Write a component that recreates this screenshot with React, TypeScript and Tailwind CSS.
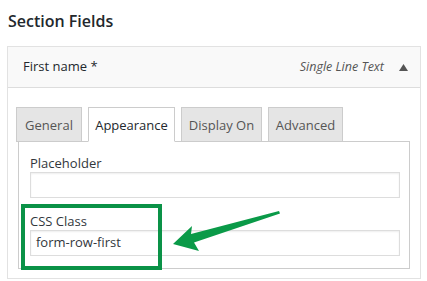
import React from "react";

const tabs = [
  { label: "General", w: "w-[66px]", active: false },
  { label: "Appearance", w: "w-[87px]", active: true },
  { label: "Display On", w: "w-[81px]", active: false },
  { label: "Advanced", w: "w-[75px]", active: false },
];

function Field({ label, value }: { label: string; value?: string }) {
  return (
    <div className="flex flex-col">
      <label className="text-[13px] leading-[18px] text-[#32373c]">{label}</label>
      <div className="h-[26px] border border-[#dddddd] shadow-[inset_0_1px_2px_rgba(0,0,0,0.07)] px-[5px] flex items-center text-[13px] text-[#32373c]">
        {value}
      </div>
    </div>
  );
}

export default function App() {
  return (
    <div
      className="relative w-[427px] h-[281px] bg-white overflow-hidden"
      style={{ fontFamily: '"Open Sans", "Noto Sans", sans-serif' }}
    >
      <h2 className="px-[8px] pt-[9px] text-[16px] leading-[24px] font-semibold text-[#23282d]">
        Section Fields
      </h2>

      <div className="mt-[13px] mx-[7px] w-[414px] border border-[#e2e2e2]">
        <div className="h-[41px] bg-[#f9f9f9] border-b border-[#dddddd] flex items-center justify-between pl-[15px] pr-[12px]">
          <span className="text-[13px] text-[#23282d]">First name *</span>
          <div className="flex items-center gap-[15px]">
            <span className="text-[12.5px] italic text-[#555]">Single Line Text</span>
            <svg width="9" height="7" viewBox="0 0 9 7">
              <path d="M4.5 0L9 7H0z" fill="#555" />
            </svg>
          </div>
        </div>

        <div className="pt-[19px] px-[10px] pb-[9px]">
          <div className="relative z-10 -mb-px -ml-[2px] flex items-end gap-[6px]">
            {tabs.map((t) => (
              <div
                key={t.label}
                className={
                  t.active
                    ? `${t.w} h-[35px] border border-[#cccccc] border-b-white bg-white flex items-center justify-center pt-[3px] text-[13px] text-[#23282d]`
                    : `${t.w} h-[35px] border border-[#cccccc] bg-[#e5e5e5] flex items-center justify-center pt-[3px] text-[13px] text-[#555]`
                }
              >
                {t.label}
              </div>
            ))}
          </div>
          <div className="border border-[#cccccc] pt-[12px] pb-[12px] pl-[11px] pr-[9px] flex flex-col gap-[14px]">
            <Field label="Placeholder" />
            <Field label="CSS Class" value="form-row-first" />
          </div>
        </div>
      </div>

      <div className="absolute left-[21px] top-[204px] w-[141px] h-[66px] border-[4px] border-[#0a9247] pointer-events-none" />

      <svg className="absolute left-0 top-0 pointer-events-none" width="427" height="281" viewBox="0 0 427 281">
        <polygon
          points="173,244 192,226 191,234 279,211 280,213.5 194,242.5 199,251"
          fill="#0a9a48"
        />
      </svg>
    </div>
  );
}
